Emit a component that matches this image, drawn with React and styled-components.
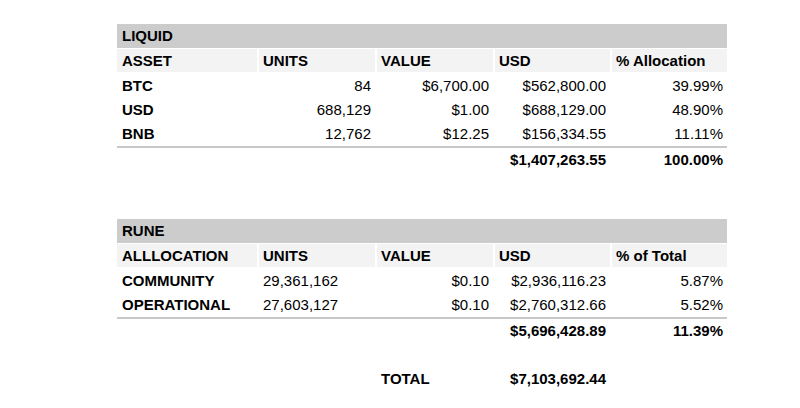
import React from "react";
import styled, { createGlobalStyle } from "styled-components";

//Styles//
const GlobalStyle = createGlobalStyle`
  html, body {
    margin: 0;
    padding: 0;
    background: #ffffff;
  }
  body {
    font-family: "Liberation Sans", Arial, Helvetica, sans-serif;
    font-size: 15px;
    color: #000;
  }
`;

const Sheet = styled.div`
  width: 800px;
  height: 408px;
  box-sizing: border-box;
  padding: 24px 0 0 117px;
  display: flex;
  flex-direction: column;
  gap: 47px;
  overflow: hidden;
`;

const Table = styled.div`
  width: 610px;
  display: flex;
  flex-direction: column;
`;

const Title = styled.div`
  height: 24px;
  line-height: 24px;
  padding-left: 5px;
  background: #cccccc;
  font-weight: bold;
`;

const Row = styled.div`
  display: grid;
  grid-template-columns: 140px 118px 118px 117px 117px;
  height: 24px;
  line-height: 24px;
  ${(p) => p.$total && "border-top: 2px solid #c8c8c8;"}
`;

const HeaderRow = styled(Row)`
  height: 26px;
  line-height: 23px;
  box-sizing: border-box;
  border-top: 1px solid #fff;
  border-bottom: 2px solid #fff;
`;

const Cell = styled.div`
  padding: 0 4px 0 6px;
  white-space: nowrap;
  text-align: ${(p) => p.$align || "left"};
  font-weight: ${(p) => (p.$bold ? "bold" : "normal")};
  &:first-child {
    padding-left: 5px;
  }
`;

const HeadCell = styled(Cell)`
  background: #f3f3f3;
  font-weight: bold;
  padding-left: 4px;
  & + & {
    border-left: 2px solid #fff;
  }
`;

const liquid = [
  ["BTC", "84", "$6,700.00", "$562,800.00", "39.99%"],
  ["USD", "688,129", "$1.00", "$688,129.00", "48.90%"],
  ["BNB", "12,762", "$12.25", "$156,334.55", "11.11%"],
];

const rune = [
  ["COMMUNITY", "29,361,162", "$0.10", "$2,936,116.23", "5.87%"],
  ["OPERATIONAL", "27,603,127", "$0.10", "$2,760,312.66", "5.52%"],
];

function Header({ cols }) {
  return (
    <HeaderRow>
      {cols.map((c) => (
        <HeadCell key={c}>{c}</HeadCell>
      ))}
    </HeaderRow>
  );
}

function DataRow({ row, unitsLeft }) {
  return (
    <Row>
      <Cell $bold>{row[0]}</Cell>
      <Cell $align={unitsLeft ? "left" : "right"}>{row[1]}</Cell>
      <Cell $align="right">{row[2]}</Cell>
      <Cell $align="right">{row[3]}</Cell>
      <Cell $align="right">{row[4]}</Cell>
    </Row>
  );
}

export default function App() {
  return (
    <>
      <GlobalStyle />
      <Sheet>
        <Table>
          <Title>LIQUID</Title>
          <Header cols={["ASSET", "UNITS", "VALUE", "USD", "% Allocation"]} />
          {liquid.map((r) => (
            <DataRow key={r[0]} row={r} />
          ))}
          <Row $total>
            <Cell />
            <Cell />
            <Cell />
            <Cell $align="right" $bold>
              $1,407,263.55
            </Cell>
            <Cell $align="right" $bold>
              100.00%
            </Cell>
          </Row>
        </Table>

        <Table>
          <Title>RUNE</Title>
          <Header cols={["ALLLOCATION", "UNITS", "VALUE", "USD", "% of Total"]} />
          {rune.map((r) => (
            <DataRow key={r[0]} row={r} unitsLeft />
          ))}
          <Row $total>
            <Cell />
            <Cell />
            <Cell />
            <Cell $align="right" $bold>
              $5,696,428.89
            </Cell>
            <Cell $align="right" $bold>
              11.39%
            </Cell>
          </Row>
          <Row />
          <Row>
            <Cell />
            <Cell />
            <Cell $bold>TOTAL</Cell>
            <Cell $align="right" $bold>
              $7,103,692.44
            </Cell>
            <Cell />
          </Row>
        </Table>
      </Sheet>
    </>
  );
}
